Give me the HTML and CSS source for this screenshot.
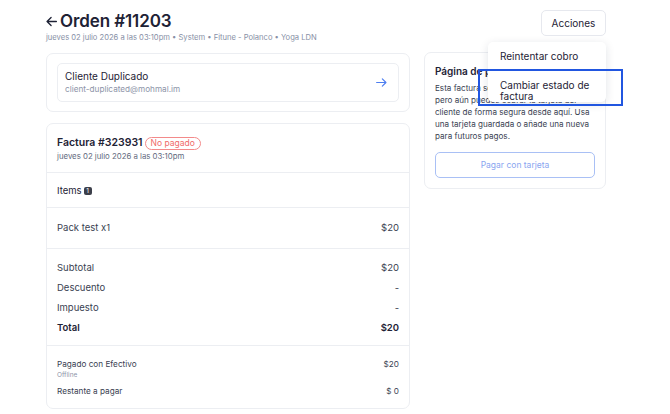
FILE: index.html
```html
<!DOCTYPE html>
<html lang="es">
<head>
    <meta charset="UTF-8">
    <meta name="viewport" content="width=device-width, initial-scale=1.0">
    <title>Orden #11203</title>
    <link rel="stylesheet" href="styles.css">
</head>
<body>
    <div class="page">
        <div class="page-header">
            <div>
                <h1 class="title">
                    <svg class="back-icon" viewBox="0 0 16 16" width="13" height="13"><path d="M14 8H2.5M7.5 3L2.5 8l5 5" fill="none" stroke="currentColor" stroke-width="1.6" stroke-linecap="round" stroke-linejoin="round"/></svg>
                    Orden #11203
                </h1>
                <div class="subtitle">jueves 02 julio 2026 a las 03:10pm &bull; System &bull; Fitune - Polanco &bull; Yoga LDN</div>
            </div>
            <div class="actions">
                <button class="btn-actions">Acciones</button>
                <div class="menu">
                    <div class="menu-item">Reintentar cobro</div>
                    <div class="menu-item">Cambiar estado de factura</div>
                </div>
                <div class="focus-ring"></div>
            </div>
        </div>

        <div class="columns">
            <div class="main-col">
                <div class="card client-card">
                    <div class="client-box">
                        <div>
                            <div class="client-name">Cliente Duplicado</div>
                            <div class="client-email">client-duplicated@mohmal.im</div>
                        </div>
                        <svg class="go-icon" viewBox="0 0 16 16" width="13" height="13"><path d="M2 8h11.5M9 3.5L13.5 8 9 12.5" fill="none" stroke="currentColor" stroke-width="1.4" stroke-linecap="round" stroke-linejoin="round"/></svg>
                    </div>
                </div>

                <div class="card invoice">
                    <div class="section invoice-head">
                        <div class="invoice-title">Factura #323931 <span class="badge-unpaid">No pagado</span></div>
                        <div class="invoice-date">jueves 02 julio 2026 a las 03:10pm</div>
                    </div>
                    <div class="section items-head">
                        Items <span class="count">1</span>
                    </div>
                    <div class="section line-item">
                        <span>Pack test x1</span>
                        <span>$20</span>
                    </div>
                    <div class="section totals">
                        <div class="row"><span>Subtotal</span><span>$20</span></div>
                        <div class="row"><span>Descuento</span><span>-</span></div>
                        <div class="row"><span>Impuesto</span><span>-</span></div>
                        <div class="row total"><span>Total</span><span>$20</span></div>
                    </div>
                    <div class="section payments">
                        <div class="row pay-row">
                            <div>
                                <div class="pay-label">Pagado con Efectivo</div>
                                <div class="pay-method">Offline</div>
                            </div>
                            <span class="pay-amount">$20</span>
                        </div>
                        <div class="row"><span>Restante a pagar</span><span>$ 0</span></div>
                    </div>
                </div>
            </div>

            <div class="side-col">
                <div class="card pay-card">
                    <div class="pay-title">Página de pago</div>
                    <p class="pay-text">Esta factura se cobrará automáticamente, pero aún puedes cobrar la tarjeta del cliente de forma segura desde aquí. Usa una tarjeta guardada o añade una nueva para futuros pagos.</p>
                    <button class="btn-pay">Pagar con tarjeta</button>
                </div>
            </div>
        </div>
    </div>
</body>
</html>
```

FILE: styles.css
```css
body {
    margin: 0;
    font-family: 'Inter', 'Liberation Sans', sans-serif;
    background-color: #ffffff;
    color: #1e2235;
}
.page {
    width: 560px;
    padding: 10px 0 0 46px;
}
.page-header {
    display: flex;
    justify-content: space-between;
    align-items: flex-start;
    height: 42px;
}
.title {
    margin: 0;
    font-size: 17px;
    font-weight: 600;
    line-height: 22px;
    letter-spacing: -0.1px;
    display: flex;
    align-items: center;
    gap: 2px;
    margin-left: -1px;
}
.back-icon {
    color: #1e2235;
}
.subtitle {
    font-size: 7.6px;
    color: #8890a6;
    margin-top: 1px;
}
.actions {
    position: relative;
}
.btn-actions {
    font-family: inherit;
    font-size: 10px;
    color: #1e2235;
    background: #fff;
    border: 1px solid #e6e8ee;
    border-radius: 5px;
    width: 65px;
    height: 26px;
    padding: 0;
}
/* dropdown opened under "Acciones" */
.menu {
    position: absolute;
    top: 32px;
    right: 0;
    width: 118px;
    background: #fff;
    border-radius: 5px;
    box-shadow: 0 2px 10px rgba(20, 30, 60, 0.12);
    padding: 4px 0 0;
    z-index: 2;
}
.menu-item {
    font-size: 10px;
    line-height: 11px;
    padding: 5px 12px;
    color: #1e2235;
}
.menu-item + .menu-item {
    padding-top: 13px;
    padding-bottom: 0;
}
.focus-ring {
    position: absolute;
    top: 59px;
    left: -63px;
    width: 141px;
    height: 33px;
    border: 2px solid #2156e0;
    z-index: 3;
}
.columns {
    display: flex;
    gap: 14px;
    align-items: flex-start;
}
.main-col {
    width: 364px;
    display: flex;
    flex-direction: column;
    gap: 11px;
    margin-top: 1px;
}
.side-col {
    width: 182px;
}
.card {
    border: 1px solid #eceef2;
    border-radius: 7px;
    background: #fff;
}
.client-card {
    padding: 9px 10px;
}
.client-box {
    border: 1px solid #eceef2;
    border-radius: 5px;
    padding: 6px 10px 6px 7px;
    display: flex;
    justify-content: space-between;
    align-items: center;
}
.client-name {
    font-size: 10px;
    line-height: 13px;
}
.client-email {
    font-size: 8.2px;
    line-height: 12px;
    color: #8d94a8;
}
.go-icon {
    color: #4d7ef0;
}
.section {
    padding: 0 10px;
    border-top: 1px solid #eceef2;
}
.section:first-child {
    border-top: none;
}
.invoice-head {
    padding-top: 12px;
    padding-bottom: 10px;
}
.invoice-title {
    font-size: 10.5px;
    font-weight: 600;
    line-height: 14px;
    display: flex;
    align-items: center;
    gap: 2px;
}
.badge-unpaid {
    font-size: 8.5px;
    font-weight: 400;
    color: #f06a6a;
    border: 1px solid #f38a8a;
    border-radius: 8px;
    padding: 0 5px;
    line-height: 11px;
}
.invoice-date {
    font-size: 7.8px;
    color: #636a7e;
    line-height: 12px;
}
.items-head {
    font-size: 9.5px;
    height: 34px;
    display: flex;
    align-items: center;
    gap: 2px;
}
.count {
    display: inline-block;
    background: #3c3f4a;
    color: #fff;
    font-size: 6.5px;
    line-height: 8px;
    width: 8px;
    text-align: center;
    border-radius: 2px;
    margin-top: 1px;
}
.line-item {
    font-size: 9.5px;
    color: #3a3f52;
    height: 41px;
    display: flex;
    justify-content: space-between;
    align-items: center;
    padding-bottom: 2px;
    box-sizing: border-box;
}
.totals {
    padding-top: 8px;
    padding-bottom: 8px;
}
.row {
    display: flex;
    justify-content: space-between;
    align-items: center;
    font-size: 9.5px;
    color: #3a3f52;
    height: 20px;
}
.total {
    font-weight: 600;
    color: #1e2235;
}
.payments {
    padding-top: 11px;
    padding-bottom: 7px;
}
.payments .row {
    font-size: 8.2px;
}
.pay-row {
    height: auto;
    align-items: flex-start;
    padding-bottom: 1px;
}
.pay-label,
.pay-amount {
    line-height: 14px;
}
.pay-method {
    font-size: 6.5px;
    color: #8d94a8;
    line-height: 9px;
}
.pay-card {
    padding: 11px 10px 10px;
}
.pay-title {
    font-size: 10px;
    font-weight: 600;
    line-height: 14px;
}
.pay-text {
    font-size: 8.1px;
    line-height: 12px;
    color: #3a3f52;
    margin: 4px 0 10px;
}
.btn-pay {
    width: 100%;
    height: 26px;
    font-family: inherit;
    font-size: 8.5px;
    color: #8aa6f0;
    background: #fff;
    border: 1px solid #a9c0f5;
    border-radius: 5px;
}
```
